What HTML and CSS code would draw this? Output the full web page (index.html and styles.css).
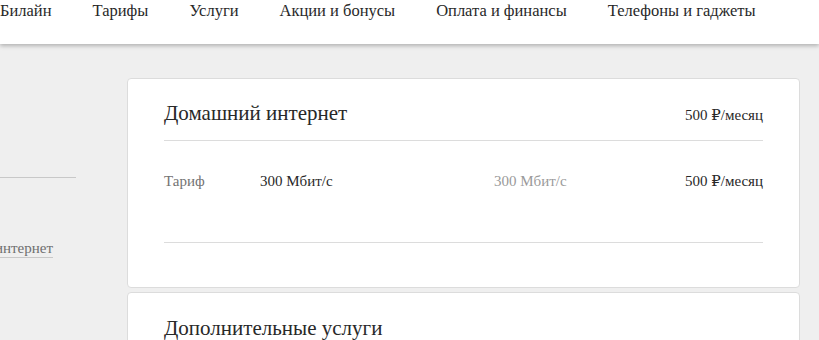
FILE: index.html
```html
<!DOCTYPE html>
<html lang="ru">
<head>
  <meta charset="UTF-8">
  <meta name="viewport" content="width=device-width, initial-scale=1.0">
  <title>Домашний интернет</title>
  <link rel="stylesheet" href="styles.css">
</head>
<body>
  <header class="top-bar">
    <nav class="top-nav">
      <a class="top-link" href="#">Билайн</a>
      <a class="top-link" href="#">Тарифы</a>
      <a class="top-link" href="#">Услуги</a>
      <a class="top-link" href="#">Акции и бонусы</a>
      <a class="top-link" href="#">Оплата и финансы</a>
      <a class="top-link" href="#">Телефоны и гаджеты</a>
    </nav>
  </header>

  <div class="page">
    <!-- Left menu, cut by the window edge -->
    <aside class="side">
      <div class="side-inner">
        <div class="side-rule"></div>
        <a class="side-link" href="#">Домашний интернет</a>
        <a class="side-link side-link-blue" href="#">Телевидение</a>
      </div>
    </aside>

    <main class="cards">
      <section class="card">
        <div class="card-head">
          <h2 class="card-title">Домашний интернет</h2>
          <span class="card-price">500 ₽/месяц</span>
        </div>
        <div class="card-row">
          <span class="row-label">Тариф</span>
          <span class="row-value">300 Мбит/с</span>
          <span class="row-old">300 Мбит/с</span>
          <span class="row-price">500 ₽/месяц</span>
        </div>
        <div class="card-foot"></div>
      </section>

      <section class="card">
        <div class="card-head card-head-plain">
          <h2 class="card-title">Дополнительные услуги</h2>
        </div>
      </section>
    </main>
  </div>
</body>
</html>
```

FILE: styles.css
```css
body {
  margin: 0;
  overflow: hidden;
  font-family: "Liberation Serif", "DejaVu Serif", serif;
  color: #282828;
  background: #efefef;
}

a {
  color: inherit;
  text-decoration: none;
}

/* Top navigation */
.top-bar {
  height: 44px;
  background: #fff;
  box-shadow: 0 2px 4px rgba(0, 0, 0, 0.25);
  position: relative;
  z-index: 2;
}

.top-nav {
  display: flex;
  gap: 41px;
  font-size: 16.5px;
  line-height: 22px;
}

/* Page body */
.page {
  display: flex;
  padding-top: 34px;
}

.side {
  width: 127px;
  flex-shrink: 0;
  overflow: hidden;
}

.side-inner {
  width: 76px;
  display: flex;
  flex-direction: column;
  align-items: flex-end;
}

.side-rule {
  align-self: stretch;
  height: 1px;
  background: #c8c8c8;
  margin-top: 99px;
}

.side-link {
  margin-top: 61px;
  margin-right: 23px;
  font-size: 15px;
  color: #6e6e6e;
  border-bottom: 1px solid #c8c8c8;
  white-space: nowrap;
  line-height: 18px;
}

.side-link-blue {
  margin-top: 52px;
  color: #4a90c8;
  border-bottom: none;
  margin-right: 76px;
}

/* Cards */
.cards {
  width: 673px;
  display: flex;
  flex-direction: column;
  gap: 4px;
}

.card {
  background: #fff;
  border: 1px solid #dcdcdc;
  border-radius: 4px;
  padding: 0 36px;
}

.card-head {
  display: flex;
  justify-content: space-between;
  align-items: baseline;
  padding: 23px 0 15px;
  border-bottom: 1px solid #dcdcdc;
}

.card-head-plain {
  border-bottom: none;
  padding-top: 24px;
}

.card-title {
  margin: 0;
  font-weight: normal;
  font-size: 21px;
  line-height: 23px;
}

.card-price,
.row-price {
  font-size: 15px;
}

.card-row {
  display: flex;
  align-items: baseline;
  padding: 31px 0 52px;
  font-size: 15px;
  line-height: 18px;
  border-bottom: 1px solid #dcdcdc;
}

.row-label {
  width: 96px;
  color: #737373;
}

.row-value {
  width: 234px;
}

.row-old {
  color: #9a9a9a;
}

.row-price {
  margin-left: auto;
}

.card-foot {
  height: 44px;
}
```
